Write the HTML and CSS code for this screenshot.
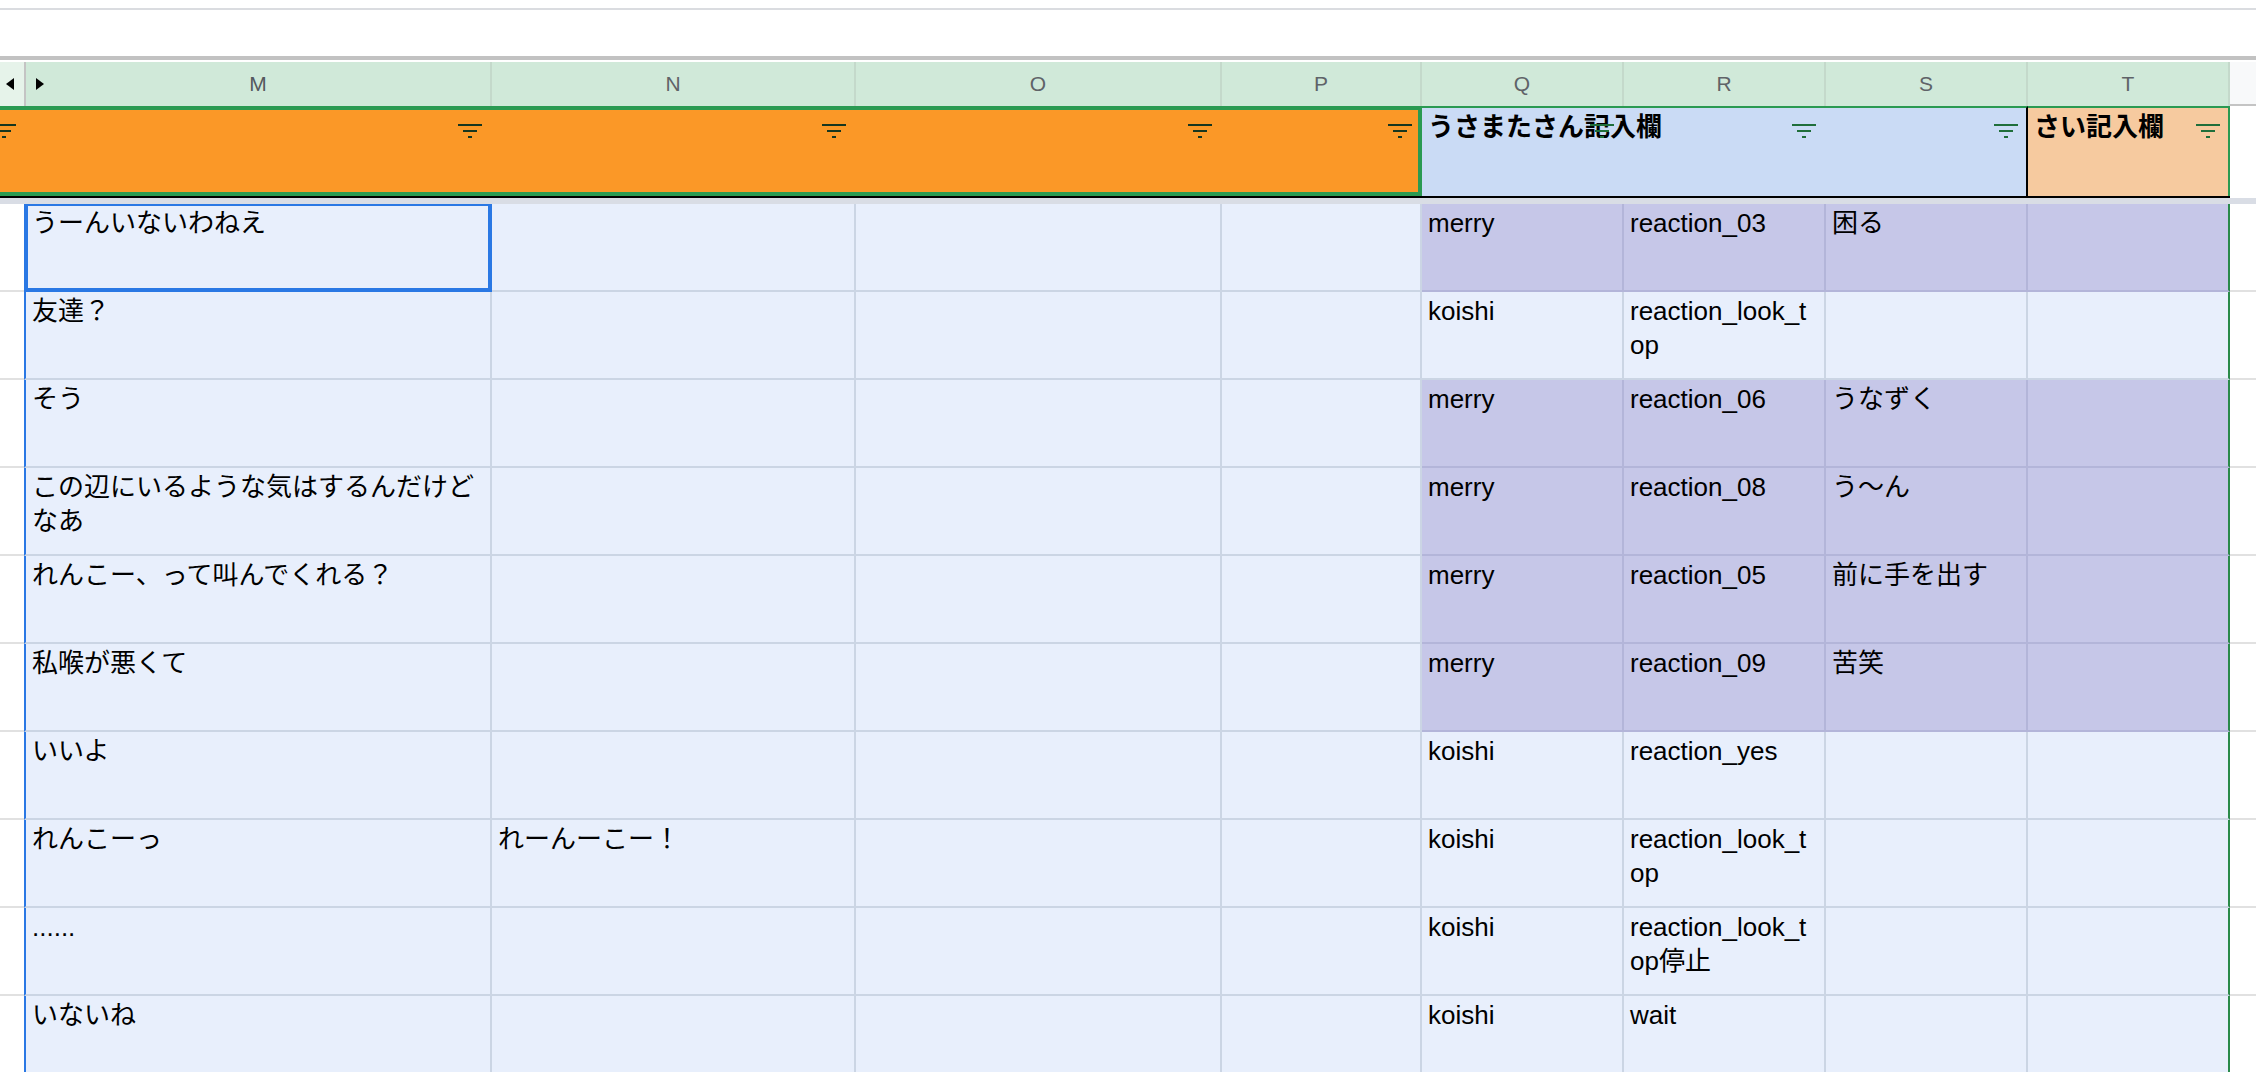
FILE: index.html
```html
<!DOCTYPE html>
<html lang="ja">
<head>
<meta charset="utf-8">
<title>Sheet</title>
<link rel="stylesheet" href="styles.css">
</head>
<body>
<div class="page">
  <div class="toparea"></div>
  <div class="split"></div>

  <div class="colhead">
    <div class="corner">
      <span class="tri tri-l"></span>
      <span class="tri tri-r"></span>
    </div>
    <div class="ch ch-m">M</div>
    <div class="ch">N</div>
    <div class="ch">O</div>
    <div class="ch">P</div>
    <div class="ch">Q</div>
    <div class="ch">R</div>
    <div class="ch">S</div>
    <div class="ch">T</div>
    <div class="ch-rest"></div>
  </div>

  <div class="hdrrow">
    <div class="hdr-range">
      <div class="blk-orange">
        <div class="fc fc-rh"><svg class="fi fi-dark" viewBox="0 0 24 14"><rect x="0" y="0" width="24" height="2"/><rect x="5" y="6" width="14" height="2"/><rect x="10" y="12" width="4" height="2"/></svg></div>
        <div class="fc"><svg class="fi fi-dark" viewBox="0 0 24 14"><rect x="0" y="0" width="24" height="2"/><rect x="5" y="6" width="14" height="2"/><rect x="10" y="12" width="4" height="2"/></svg></div>
        <div class="fc"><svg class="fi fi-dark" viewBox="0 0 24 14"><rect x="0" y="0" width="24" height="2"/><rect x="5" y="6" width="14" height="2"/><rect x="10" y="12" width="4" height="2"/></svg></div>
        <div class="fc"><svg class="fi fi-dark" viewBox="0 0 24 14"><rect x="0" y="0" width="24" height="2"/><rect x="5" y="6" width="14" height="2"/><rect x="10" y="12" width="4" height="2"/></svg></div>
        <div class="fc fc-last"><svg class="fi fi-dark" viewBox="0 0 24 14"><rect x="0" y="0" width="24" height="2"/><rect x="5" y="6" width="14" height="2"/><rect x="10" y="12" width="4" height="2"/></svg></div>
      </div>
      <div class="blk-blue">
        <div class="htitle">うさまたさん記入欄</div>
        <div class="fc fc-q"><svg class="fi fi-green" viewBox="0 0 24 14"><rect x="0" y="0" width="24" height="2"/><rect x="5" y="6" width="14" height="2"/><rect x="10" y="12" width="4" height="2"/></svg></div>
        <div class="fc fc-r"><svg class="fi fi-green" viewBox="0 0 24 14"><rect x="0" y="0" width="24" height="2"/><rect x="5" y="6" width="14" height="2"/><rect x="10" y="12" width="4" height="2"/></svg></div>
        <div class="fc fc-s"><svg class="fi fi-green" viewBox="0 0 24 14"><rect x="0" y="0" width="24" height="2"/><rect x="5" y="6" width="14" height="2"/><rect x="10" y="12" width="4" height="2"/></svg></div>
      </div>
      <div class="blk-peach">
        <div class="htitle">さい記入欄</div>
        <div class="fc fc-t"><svg class="fi fi-green" viewBox="0 0 24 14"><rect x="0" y="0" width="24" height="2"/><rect x="5" y="6" width="14" height="2"/><rect x="10" y="12" width="4" height="2"/></svg></div>
      </div>
    </div>
    <div class="hdr-rest"></div>
  </div>

  <div class="freeze"></div>

  <div class="rows">
    <div class="row">
      <div class="rh"></div>
      <div class="c cm active">うーんいないわねえ</div>
      <div class="c"></div><div class="c"></div><div class="c"></div>
      <div class="c pu">merry</div><div class="c pu">reaction_03</div><div class="c pu">困る</div><div class="c pu ct"></div>
      <div class="rest"></div>
    </div>
    <div class="row">
      <div class="rh"></div>
      <div class="c cm">友達？</div>
      <div class="c"></div><div class="c"></div><div class="c"></div>
      <div class="c">koishi</div><div class="c">reaction_look_top</div><div class="c"></div><div class="c ct"></div>
      <div class="rest"></div>
    </div>
    <div class="row">
      <div class="rh"></div>
      <div class="c cm">そう</div>
      <div class="c"></div><div class="c"></div><div class="c"></div>
      <div class="c pu">merry</div><div class="c pu">reaction_06</div><div class="c pu">うなずく</div><div class="c pu ct"></div>
      <div class="rest"></div>
    </div>
    <div class="row">
      <div class="rh"></div>
      <div class="c cm">この辺にいるような気はするんだけどなあ</div>
      <div class="c"></div><div class="c"></div><div class="c"></div>
      <div class="c pu">merry</div><div class="c pu">reaction_08</div><div class="c pu">う〜ん</div><div class="c pu ct"></div>
      <div class="rest"></div>
    </div>
    <div class="row">
      <div class="rh"></div>
      <div class="c cm">れんこー、って叫んでくれる？</div>
      <div class="c"></div><div class="c"></div><div class="c"></div>
      <div class="c pu">merry</div><div class="c pu">reaction_05</div><div class="c pu">前に手を出す</div><div class="c pu ct"></div>
      <div class="rest"></div>
    </div>
    <div class="row">
      <div class="rh"></div>
      <div class="c cm">私喉が悪くて</div>
      <div class="c"></div><div class="c"></div><div class="c"></div>
      <div class="c pu">merry</div><div class="c pu">reaction_09</div><div class="c pu">苦笑</div><div class="c pu ct"></div>
      <div class="rest"></div>
    </div>
    <div class="row">
      <div class="rh"></div>
      <div class="c cm">いいよ</div>
      <div class="c"></div><div class="c"></div><div class="c"></div>
      <div class="c">koishi</div><div class="c">reaction_yes</div><div class="c"></div><div class="c ct"></div>
      <div class="rest"></div>
    </div>
    <div class="row">
      <div class="rh"></div>
      <div class="c cm">れんこーっ</div>
      <div class="c">れーんーこー！</div><div class="c"></div><div class="c"></div>
      <div class="c">koishi</div><div class="c">reaction_look_top</div><div class="c"></div><div class="c ct"></div>
      <div class="rest"></div>
    </div>
    <div class="row">
      <div class="rh"></div>
      <div class="c cm">......</div>
      <div class="c"></div><div class="c"></div><div class="c"></div>
      <div class="c">koishi</div><div class="c">reaction_look_top停止</div><div class="c"></div><div class="c ct"></div>
      <div class="rest"></div>
    </div>
    <div class="row">
      <div class="rh"></div>
      <div class="c cm">いないね</div>
      <div class="c"></div><div class="c"></div><div class="c"></div>
      <div class="c">koishi</div><div class="c">wait</div><div class="c"></div><div class="c ct"></div>
      <div class="rest"></div>
    </div>
  </div>
</div>
</body>
</html>
```

FILE: styles.css
```css
* { box-sizing: border-box; }

html, body {
  margin: 0;
  padding: 0;
  background: #ffffff;
}

body {
  width: 2256px;
  height: 1072px;
  overflow: hidden;
  font-family: "Liberation Sans", "Noto Sans CJK JP", sans-serif;
  font-size: 26px;
  color: #000;
}

.page {
  width: 2256px;
  height: 1072px;
  overflow: hidden;
  display: flex;
  flex-direction: column;
}

.toparea {
  height: 56px;
  flex: none;
  background: #fff;
  border-top: 8px solid #fff;
  position: relative;
}
.toparea::before {
  content: "";
  display: block;
  height: 2px;
  background: #dadce0;
}

.split {
  height: 6px;
  flex: none;
  border-top: 4px solid #c2c2c2;
  background: #fff;
}

/* column letters */
.colhead {
  height: 44px;
  flex: none;
  display: grid;
  grid-template-columns: 24px 468px 364px 366px 200px 202px 202px 202px 202px 26px;
}
.corner {
  background: #e6f3ea;
  display: flex;
  align-items: center;
  padding-left: 6px;
  gap: 22px;
  position: relative;
  z-index: 2;
}
.tri {
  display: block;
  width: 0;
  height: 0;
  border-top: 6px solid transparent;
  border-bottom: 6px solid transparent;
  flex: none;
}
.tri-l { border-right: 8px solid #000; }
.tri-r { border-left: 8px solid #000; }

.ch {
  background: #d0e9d9;
  border-right: 2px solid #c4d9cb;
  display: flex;
  align-items: center;
  justify-content: center;
  font-family: "Liberation Sans", Arial, sans-serif;
  font-size: 21px;
  color: #5f6368;
}
.ch-m {
  border-left: 2px solid #c4c4c4;
  color: #55595e;
}
.ch-rest {
  background: #f8f9fa;
  border-bottom: 2px solid #c4c4c4;
}

/* filter header row */
.hdrrow {
  height: 92px;
  flex: none;
  display: flex;
}
.hdr-range {
  width: 2230px;
  flex: none;
  display: grid;
  grid-template-columns: 1422px 606px 202px;
  border-bottom: 2px solid #000;
}
.hdr-rest {
  flex: 1;
  background: #fff;
}

.blk-orange {
  background: #fb9827;
  border-top: 4px solid #2a9a52;
  border-right: 4px solid #2a9a52;
  border-bottom: 4px solid #2a9a52;
  display: grid;
  grid-template-columns: 24px 468px 364px 366px 196px;
}
.fc {
  display: flex;
  justify-content: flex-end;
  align-items: flex-start;
  padding-top: 14px;
  padding-right: 10px;
  position: relative;
  z-index: 2;
}
.fc-rh { padding-right: 8px; }
.fc-last { padding-right: 6px; }

.fi {
  width: 24px;
  height: 14px;
  flex: none;
  display: block;
}
.fi-dark { fill: #17361f; }
.fi-green { fill: #1f6e3a; }

.blk-blue {
  background: #cadbf5;
  border-top: 2px solid #2a9a52;
  border-right: 2px solid #000;
  display: grid;
  grid-template-columns: 202px 202px 200px;
  grid-template-rows: 1fr;
}
.blk-peach {
  background: #f6ca9f;
  border-top: 2px solid #2a9a52;
  border-right: 2px solid #2a9a52;
  display: grid;
  grid-template-columns: 1fr;
  grid-template-rows: 1fr;
}
.blk-blue .fc, .blk-peach .fc { padding-top: 16px; }
.fc-q { grid-column: 1; grid-row: 1; }
.fc-r { grid-column: 2; grid-row: 1; }
.fc-s { grid-column: 3; grid-row: 1; padding-right: 8px; }
.fc-t { grid-column: 1; grid-row: 1; padding-right: 8px; }

.htitle {
  grid-column: 1 / -1;
  grid-row: 1;
  font-weight: bold;
  font-size: 26px;
  line-height: 34px;
  padding: 2px 0 0 6px;
  white-space: nowrap;
  position: relative;
  z-index: 1;
}

.freeze {
  height: 6px;
  flex: none;
  background: #d9dde5;
}

/* data rows */
.rows {
  display: flex;
  flex-direction: column;
}
.row {
  height: 88px;
  flex: none;
  display: grid;
  grid-template-columns: 24px 468px 364px 366px 200px 202px 202px 202px 202px 26px;
}
.rh, .rest {
  background: #fff;
  border-bottom: 2px solid #e1e1e1;
}
.c {
  background: #e8effc;
  border-right: 2px solid #cbd5e4;
  border-bottom: 2px solid #cbd5e4;
  padding: 2px 6px 0 6px;
  line-height: 34px;
  word-break: break-all;
  overflow: hidden;
}
.cm {
  border-left: 2px solid #2a78e4;
  position: relative;
  overflow: visible;
}
.c.pu {
  background: #c6c7e8;
  border-right-color: #b3b5d9;
  border-bottom-color: #b3b5d9;
}
.c.ct {
  border-right-color: #2a8a4a;
}

.active::after {
  content: "";
  position: absolute;
  left: -2px;
  right: -2px;
  top: 0;
  bottom: -2px;
  border: 4px solid #2a78e4;
  border-top-width: 2px;
  pointer-events: none;
}
```
